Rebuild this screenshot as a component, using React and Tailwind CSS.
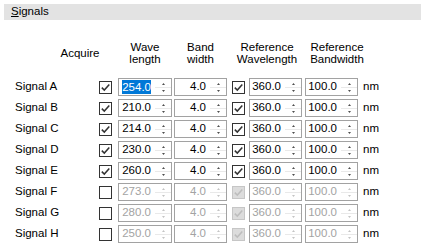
import React from 'react';

const rows = [
  { name: 'Signal A', on: true, wave: '254.0', selected: true },
  { name: 'Signal B', on: true, wave: '210.0' },
  { name: 'Signal C', on: true, wave: '214.0' },
  { name: 'Signal D', on: true, wave: '230.0' },
  { name: 'Signal E', on: true, wave: '260.0' },
  { name: 'Signal F', on: false, wave: '273.0' },
  { name: 'Signal G', on: false, wave: '280.0' },
  { name: 'Signal H', on: false, wave: '250.0' },
];

const CheckBox = ({ checked, disabled }) => (
  <div
    className={`w-[13px] h-[13px] shrink-0 border flex items-center justify-center ${
      disabled ? 'border-[#c6c6c6] bg-[#dcdcdc]' : 'border-[#333333] bg-white'
    }`}
  >
    {checked && (
      <svg width="11" height="11" viewBox="0 0 11 11">
        <path
          d="M1.8 5.6 L4.3 8.1 L9.3 2.6"
          fill="none"
          stroke={disabled ? '#bdbdbd' : '#333333'}
          strokeWidth="1.5"
        />
      </svg>
    )}
  </div>
);

const Spinner = ({ disabled }) => {
  const c = disabled ? '#c4c4c4' : '#505050';
  return (
    <div className="w-[16px] h-full flex flex-col shrink-0">
      <div className="flex-1 flex items-end justify-center pb-[2px]">
        <svg width="3" height="2" viewBox="0 0 3 2">
          <polygon points="0,2 1.5,0 3,2" fill={c} />
        </svg>
      </div>
      <div className="h-px bg-[#e9e9e9]" />
      <div className="flex-1 flex items-start justify-center pt-[2px]">
        <svg width="3" height="2" viewBox="0 0 3 2">
          <polygon points="0,0 1.5,2 3,0" fill={c} />
        </svg>
      </div>
    </div>
  );
};

const NumBox = ({ value, disabled, selected, width }) => (
  <div className={`${width} h-[18px] shrink-0 border border-[#a2a2a2] bg-white flex`}>
    <div
      className={`flex-1 flex items-center justify-end pr-[4px] ${
        disabled ? 'text-[#a3a3a3]' : 'text-black'
      }`}
    >
      {selected ? (
        <span className="bg-[#0078d7] text-white leading-[14px]">{value}</span>
      ) : (
        value
      )}
    </div>
    <Spinner disabled={disabled} />
  </div>
);

export default function App() {
  return (
    <div className="w-[421px] h-[249px] bg-white pt-[4px] text-[11.5px] text-black font-['Liberation_Sans',Arial,sans-serif]">
      <div className="ml-[4px] h-[16px] bg-[#e3e3e3] pl-[7px] flex items-center">
        <span>
          <span className="underline">S</span>ignals
        </span>
      </div>

      <div className="mt-[21px] flex items-center leading-[12px] text-center">
        <div className="w-[55px]" />
        <div className="w-[50px]">Acquire</div>
        <div className="ml-[13px] w-[54px]">
          Wave
          <br />
          length
        </div>
        <div className="ml-[2px] w-[53px]">
          Band
          <br />
          width
        </div>
        <div className="ml-[5px] w-[70px]">
          Reference
          <br />
          Wavelength
        </div>
        <div className="ml-[3px] w-[64px]">
          Reference
          <br />
          Bandwidth
        </div>
      </div>

      <div className="mt-[13px] flex flex-col gap-[3px]">
        {rows.map((r) => (
          <div key={r.name} className="h-[18px] flex items-center">
            <div className="w-[99px] pl-[15px]">{r.name}</div>
            <CheckBox checked={r.on} />
            <div className="ml-[6px]">
              <NumBox value={r.wave} disabled={!r.on} selected={r.selected} width="w-[54px]" />
            </div>
            <div className="ml-[2px]">
              <NumBox value="4.0" disabled={!r.on} width="w-[53px]" />
            </div>
            <div className="ml-[5px]">
              <CheckBox checked disabled={!r.on} />
            </div>
            <div className="ml-[4px]">
              <NumBox value="360.0" disabled={!r.on} width="w-[53px]" />
            </div>
            <div className="ml-[3px]">
              <NumBox value="100.0" disabled={!r.on} width="w-[53px]" />
            </div>
            <div className="ml-[5px]">nm</div>
          </div>
        ))}
      </div>
    </div>
  );
}
